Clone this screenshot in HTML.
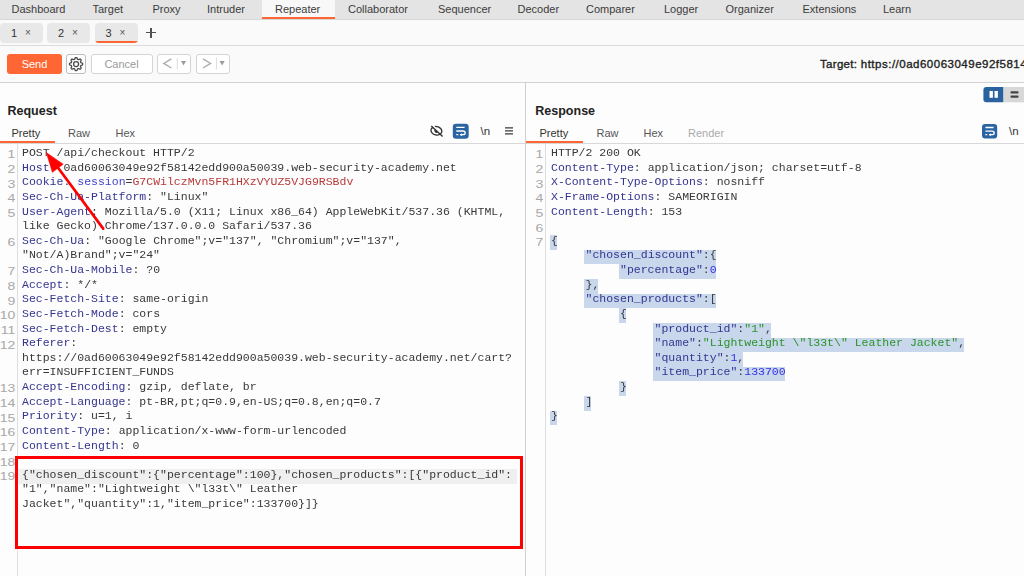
<!DOCTYPE html>
<html><head><meta charset="utf-8">
<style>
*{box-sizing:border-box;margin:0;padding:0}
html,body{width:1024px;height:576px;overflow:hidden;background:#fdfdfd;font-family:"Liberation Sans",sans-serif;color:#3a3a3a}
.a{position:absolute}
#nav{left:0;top:0;width:1024px;height:19px;background:#e4e4e4}
#nav span{position:absolute;top:0;font-size:11px;line-height:19px;color:#3c3c3c;white-space:nowrap}
#navsel{left:262px;top:0;width:73px;height:19px;background:#f8f8f8}
#navul{left:262px;top:17px;width:73px;height:2px;background:#ff6633}
#tabs{left:0;top:19px;width:1024px;height:26px;background:#fafafa;border-top:1px solid #d6d9d9}
.pill{position:absolute;top:23px;height:20px;width:43px;background:#e8e8e8;border-radius:4px;font-size:11px;line-height:20px;color:#333}
.pill b{position:absolute;font-weight:normal}
.pill i{position:absolute;font-style:normal;font-size:10px;color:#555}
#tb{left:0;top:45px;width:1024px;height:38px;background:#fafafa;border-top:1px solid #dcdcdc;border-bottom:1px solid #d3d2d0}
.btn{position:absolute;top:54px;height:20px;border:1px solid #d4d4d4;border-radius:3px;background:#fff}
.code{will-change:transform;font-family:"Liberation Mono",monospace;font-size:11.5px;line-height:14.625px;white-space:pre;color:#383838}
.code div{height:14.625px}
.n{color:#35358f}.p{color:#4545cc}.r{color:#b83a3a}.g{color:#2a942a}.u{color:#3232e4}
.hl{position:absolute;background:#c8d7ec;height:14.625px}
.ln{font-family:"Liberation Sans",sans-serif;font-size:11.5px;line-height:14.625px;color:#a8a8a8;text-align:right;transform:scaleX(1.22);transform-origin:100% 0}
.ln div{height:14.625px}
.tab{position:absolute;font-size:11px;line-height:14px;white-space:nowrap}
</style></head><body>
<div id="nav" class="a"><div id="navsel" class="a"></div><div id="navul" class="a"></div><span style="left:11.5px">Dashboard</span><span style="left:92.5px">Target</span><span style="left:152.5px">Proxy</span><span style="left:207px">Intruder</span><span style="left:275px">Repeater</span><span style="left:348px">Collaborator</span><span style="left:438px">Sequencer</span><span style="left:517.5px">Decoder</span><span style="left:586px">Comparer</span><span style="left:664px">Logger</span><span style="left:725.5px">Organizer</span><span style="left:802.5px">Extensions</span><span style="left:883px">Learn</span></div>
<div id="tabs" class="a"></div>
<div class="pill" style="left:0"><b style="left:11px">1</b><i style="left:25px">×</i></div>
<div class="pill" style="left:47px"><b style="left:11px">2</b><i style="left:25px">×</i></div>
<div class="pill" style="left:94.5px;overflow:hidden"><b style="left:11px">3</b><i style="left:25px">×</i><div class="a" style="left:0;bottom:0;width:43px;height:2px;background:#ff6633"></div></div>
<div class="a" style="left:146px;top:32.3px;width:10px;height:1.2px;background:#505050"></div>
<div class="a" style="left:150.4px;top:28px;width:1.2px;height:9.8px;background:#505050"></div>
<div id="tb" class="a"></div>
<div class="a" style="left:7px;top:54px;width:55px;height:20px;background:#ff6633;border-radius:3px;color:#fff;font-size:11px;line-height:20px;text-align:center">Send</div>
<div class="btn" style="left:66px;width:20px;border-color:#bdbdbd"></div>
<svg class="a" style="left:0;top:0" width="1024" height="576"><path d="M76.10,57.55 L76.36,57.56 L76.61,57.60 L76.86,57.69 L77.08,57.94 L77.22,58.46 L77.33,58.98 L77.47,59.24 L77.64,59.37 L77.81,59.45 L77.99,59.53 L78.17,59.60 L78.36,59.67 L78.57,59.70 L78.85,59.61 L79.29,59.32 L79.76,59.06 L80.10,59.03 L80.34,59.14 L80.54,59.29 L80.73,59.47 L80.91,59.66 L81.06,59.86 L81.17,60.10 L81.14,60.44 L80.88,60.91 L80.59,61.35 L80.50,61.63 L80.53,61.84 L80.60,62.03 L80.67,62.21 L80.75,62.39 L80.83,62.56 L80.96,62.73 L81.22,62.87 L81.74,62.98 L82.26,63.12 L82.51,63.34 L82.60,63.59 L82.64,63.84 L82.65,64.10 L82.64,64.36 L82.60,64.61 L82.51,64.86 L82.26,65.08 L81.74,65.22 L81.22,65.33 L80.96,65.47 L80.83,65.64 L80.75,65.81 L80.67,65.99 L80.60,66.17 L80.53,66.36 L80.50,66.57 L80.59,66.85 L80.88,67.29 L81.14,67.76 L81.17,68.10 L81.06,68.34 L80.91,68.54 L80.73,68.73 L80.54,68.91 L80.34,69.06 L80.10,69.17 L79.76,69.14 L79.29,68.88 L78.85,68.59 L78.57,68.50 L78.36,68.53 L78.17,68.60 L77.99,68.67 L77.81,68.75 L77.64,68.83 L77.47,68.96 L77.33,69.22 L77.22,69.74 L77.08,70.26 L76.86,70.51 L76.61,70.60 L76.36,70.64 L76.10,70.65 L75.84,70.64 L75.59,70.60 L75.34,70.51 L75.12,70.26 L74.98,69.74 L74.87,69.22 L74.73,68.96 L74.56,68.83 L74.39,68.75 L74.21,68.67 L74.03,68.60 L73.84,68.53 L73.63,68.50 L73.35,68.59 L72.91,68.88 L72.44,69.14 L72.10,69.17 L71.86,69.06 L71.66,68.91 L71.47,68.73 L71.29,68.54 L71.14,68.34 L71.03,68.10 L71.06,67.76 L71.32,67.29 L71.61,66.85 L71.70,66.57 L71.67,66.36 L71.60,66.17 L71.53,65.99 L71.45,65.81 L71.37,65.64 L71.24,65.47 L70.98,65.33 L70.46,65.22 L69.94,65.08 L69.69,64.86 L69.60,64.61 L69.56,64.36 L69.55,64.10 L69.56,63.84 L69.60,63.59 L69.69,63.34 L69.94,63.12 L70.46,62.98 L70.98,62.87 L71.24,62.73 L71.37,62.56 L71.45,62.39 L71.53,62.21 L71.60,62.03 L71.67,61.84 L71.70,61.63 L71.61,61.35 L71.32,60.91 L71.06,60.44 L71.03,60.10 L71.14,59.86 L71.29,59.66 L71.47,59.47 L71.66,59.29 L71.86,59.14 L72.10,59.03 L72.44,59.06 L72.91,59.32 L73.35,59.61 L73.63,59.70 L73.84,59.67 L74.03,59.60 L74.21,59.53 L74.39,59.45 L74.56,59.37 L74.73,59.24 L74.87,58.98 L74.98,58.46 L75.12,57.94 L75.34,57.69 L75.59,57.60 L75.84,57.56 Z" fill="none" stroke="#4a4a4a" stroke-width="1.3" stroke-linejoin="round"/><circle cx="76.1" cy="64.1" r="2.5" fill="none" stroke="#4a4a4a" stroke-width="1.3"/></svg>
<div class="btn" style="left:90.5px;width:62px;color:#9a9a9a;font-size:11px;line-height:18px;text-align:center">Cancel</div>
<div class="btn" style="left:157px;width:34px"></div>
<div class="btn" style="left:195.5px;width:34px"></div>
<svg class="a" style="left:0;top:0" width="1024" height="576">
<path d="M171.4,58.8 L163.8,63.4 L171.4,68" fill="none" stroke="#adadad" stroke-width="1.4"/>
<rect x="176.8" y="57.8" width="1" height="11.7" fill="#dcdcdc"/>
<path d="M181,61 L186,61 L183.5,65.6 Z" fill="#9a9a9a"/>
<path d="M203,58.8 L210.6,63.4 L203,68" fill="none" stroke="#adadad" stroke-width="1.4"/>
<rect x="215.9" y="57.8" width="1" height="11.7" fill="#dcdcdc"/>
<path d="M219.6,61 L224.6,61 L222.1,65.6 Z" fill="#9a9a9a"/>
</svg>
<div class="a" style="left:820px;top:56px;font-size:11.5px;line-height:16px;color:#222;-webkit-text-stroke:0.35px #222;white-space:nowrap"><span style="letter-spacing:0.3px">Target: </span><span style="letter-spacing:0.5px">https://0ad60063049e92f58142edd900a50039.web-security-academy.net</span></div>
<div class="a" style="left:525px;top:83px;width:1px;height:493px;background:#cfcfcf"></div>
<div class="a" style="left:7.5px;top:103.7px;font-size:12.5px;font-weight:bold;color:#222;line-height:15px">Request</div>
<div class="tab" style="left:11.5px;top:126.3px;color:#333">Pretty</div>
<div class="tab" style="left:68px;top:126.3px;color:#555">Raw</div>
<div class="tab" style="left:115.5px;top:126.3px;color:#555">Hex</div>
<div class="a" style="left:0;top:141px;width:55px;height:2px;background:#ff6633"></div>
<div class="a" style="left:0;top:143px;width:525px;height:1px;background:#d8d8d8"></div>
<div class="a" style="left:17px;top:144px;width:1px;height:432px;background:#dedede"></div>
<svg class="a" style="left:0;top:0" width="1024" height="576">
<ellipse cx="436.4" cy="130.8" rx="5.5" ry="4.2" fill="none" stroke="#333" stroke-width="1.35" transform="rotate(12 436.4 130.8)"/>
<path d="M432.5,125.4 L437.5,130.1" stroke="#fdfdfd" stroke-width="1.6"/>
<path d="M438,132.2 A2.2,2.2 0 0 1 434.8,129.2 Z" fill="#333"/>
<path d="M431.3,125.9 L442.6,136.6" stroke="#333" stroke-width="1.35"/>
<rect x="452.8" y="123.7" width="15.9" height="15" rx="3.2" fill="#2a64a2"/>
<path d="M456.3,127.3 H464.6 M456.3,131 H463 Q465.2,131 465.2,132.9 Q465.2,134.7 463,134.7 H460.3 M456.3,134.7 H458.3" fill="none" stroke="#fff" stroke-width="1.3"/>
<path d="M461.8,133.2 L459.8,134.7 L461.8,136.2 Z" fill="#fff"/>
<path d="M505,127.8 H513 M505,130.8 H513 M505,133.8 H513" stroke="#3a3a3a" stroke-width="1.3"/>
</svg>
<div class="a" style="left:480.5px;top:123.5px;font-size:11.5px;line-height:14px;color:#333">\n</div>
<div class="a" style="left:535.3px;top:103.7px;font-size:12.5px;font-weight:bold;color:#222;line-height:15px">Response</div>
<div class="tab" style="left:539.5px;top:126.3px;color:#333">Pretty</div>
<div class="tab" style="left:596.5px;top:126.3px;color:#555">Raw</div>
<div class="tab" style="left:643.5px;top:126.3px;color:#555">Hex</div>
<div class="tab" style="left:688px;top:126.3px;color:#aaa">Render</div>
<div class="a" style="left:526px;top:141px;width:57px;height:2px;background:#ff6633"></div>
<div class="a" style="left:526px;top:143px;width:498px;height:1px;background:#d8d8d8"></div>
<div class="a" style="left:545px;top:144px;width:1px;height:432px;background:#dedede"></div>
<svg class="a" style="left:0;top:0" width="1024" height="576">
<path d="M983.4,90 Q983.4,87 986.4,87 H1003.5 V102.3 H986.4 Q983.4,102.3 983.4,99.3 Z" fill="#2a62a0"/>
<rect x="1003.5" y="87" width="20.5" height="15.3" fill="#d8d8d8"/>
<rect x="989.5" y="91" width="3.4" height="6.8" fill="#fff"/>
<rect x="994.5" y="91" width="3.4" height="6.8" fill="#fff"/>
<rect x="1010.5" y="91.3" width="8" height="2.3" rx="0.8" fill="#444"/>
<rect x="1010.5" y="95.5" width="8" height="2.3" rx="0.8" fill="#444"/>
<rect x="982" y="124" width="15.2" height="14.5" rx="3.2" fill="#2a64a2"/>
<path d="M985.4,127.5 H993.6 M985.4,131.1 H992 Q994.2,131.1 994.2,132.9 Q994.2,134.7 992,134.7 H989.3 M985.4,134.7 H987.3" fill="none" stroke="#fff" stroke-width="1.3"/>
<path d="M990.8,133.2 L988.8,134.7 L990.8,136.2 Z" fill="#fff"/>
</svg>
<div class="a" style="left:1009px;top:123.5px;font-size:11.5px;line-height:14px;color:#333">\n</div>
<div class="a" style="left:18px;top:469.200px;width:499px;height:14.625px;background:#efefef"></div>
<div class="a ln" style="left:0;top:147.45px;width:15.3px"><div>1</div><div>2</div><div>3</div><div>4</div><div>5</div><div></div><div>6</div><div></div><div>7</div><div>8</div><div>9</div><div>10</div><div>11</div><div>12</div><div></div><div></div><div>13</div><div>14</div><div>15</div><div>16</div><div>17</div><div>18</div><div>19</div><div></div><div></div></div>
<div class="a code" style="left:22.4px;top:146.100px"><div>POST /api/checkout HTTP/2</div><div><span class=n>Host</span>: 0ad60063049e92f58142edd900a50039.web-security-academy.net</div><div><span class=n>Cookie</span>: <span class=p>session</span>=<span class=r>G7CWilczMvn5FR1HXzVYUZ5VJG9RSBdv</span></div><div><span class=n>Sec-Ch-Ua-Platform</span>: "Linux"</div><div><span class=n>User-Agent</span>: Mozilla/5.0 (X11; Linux x86_64) AppleWebKit/537.36 (KHTML,</div><div>like Gecko) Chrome/137.0.0.0 Safari/537.36</div><div><span class=n>Sec-Ch-Ua</span>: "Google Chrome";v="137", "Chromium";v="137",</div><div>"Not/A)Brand";v="24"</div><div><span class=n>Sec-Ch-Ua-Mobile</span>: ?0</div><div><span class=n>Accept</span>: */*</div><div><span class=n>Sec-Fetch-Site</span>: same-origin</div><div><span class=n>Sec-Fetch-Mode</span>: cors</div><div><span class=n>Sec-Fetch-Dest</span>: empty</div><div><span class=n>Referer</span>:</div><div>https://0ad60063049e92f58142edd900a50039.web-security-academy.net/cart?</div><div>err=INSUFFICIENT_FUNDS</div><div><span class=n>Accept-Encoding</span>: gzip, deflate, br</div><div><span class=n>Accept-Language</span>: pt-BR,pt;q=0.9,en-US;q=0.8,en;q=0.7</div><div><span class=n>Priority</span>: u=1, i</div><div><span class=n>Content-Type</span>: application/x-www-form-urlencoded</div><div><span class=n>Content-Length</span>: 0</div><div></div><div>{"chosen_discount":{"percentage":100},"chosen_products":[{"product_id":</div><div>"1","name":"Lightweight \"l33t\" Leather</div><div>Jacket","quantity":1,"item_price":133700}]}</div></div>
<div class="hl" style="left:549.90px;top:235.200px;width:6.90px"></div>
<div class="hl" style="left:584.40px;top:249.825px;width:131.12px"></div>
<div class="hl" style="left:618.91px;top:264.450px;width:96.61px"></div>
<div class="hl" style="left:584.40px;top:279.075px;width:13.80px"></div>
<div class="hl" style="left:584.40px;top:293.700px;width:131.12px"></div>
<div class="hl" style="left:618.91px;top:308.325px;width:6.90px"></div>
<div class="hl" style="left:653.41px;top:322.950px;width:117.32px"></div>
<div class="hl" style="left:653.41px;top:337.575px;width:310.55px"></div>
<div class="hl" style="left:653.41px;top:352.200px;width:89.71px"></div>
<div class="hl" style="left:653.41px;top:366.825px;width:131.12px"></div>
<div class="hl" style="left:618.91px;top:381.450px;width:6.90px"></div>
<div class="hl" style="left:584.40px;top:396.075px;width:6.90px"></div>
<div class="hl" style="left:549.90px;top:410.700px;width:6.90px"></div>
<div class="a ln" style="left:527px;top:147.45px;width:16.4px"><div>1</div><div>2</div><div>3</div><div>4</div><div>5</div><div>6</div><div>7</div><div></div><div></div><div></div><div></div><div></div><div></div><div></div><div></div><div></div><div></div><div></div><div></div></div>
<div class="a code" style="left:550.9px;top:146.100px"><div>HTTP/2 200 OK</div><div><span class=n>Content-Type</span>: application/json; charset=utf-8</div><div><span class=n>X-Content-Type-Options</span>: nosniff</div><div><span class=n>X-Frame-Options</span>: SAMEORIGIN</div><div><span class=n>Content-Length</span>: 153</div><div></div><div>{</div><div>     <span class=n>"chosen_discount"</span>:{</div><div>          <span class=n>"percentage"</span>:<span class=u>0</span></div><div>     },</div><div>     <span class=n>"chosen_products"</span>:[</div><div>          {</div><div>               <span class=n>"product_id"</span>:<span class=g>"1"</span>,</div><div>               <span class=n>"name"</span>:<span class=g>"Lightweight \"l33t\" Leather Jacket"</span>,</div><div>               <span class=n>"quantity"</span>:<span class=u>1</span>,</div><div>               <span class=n>"item_price"</span>:<span class=u>133700</span></div><div>          }</div><div>     ]</div><div>}</div></div>
<div class="a" style="left:15px;top:456.4px;width:508px;height:92.4px;border:3px solid #ff0000"></div>
<svg class="a" style="left:0;top:0" width="1024" height="576">
<path d="M103.2,228.6 L57.5,167" stroke="#ff0000" stroke-width="2.7" stroke-linecap="round"/>
<path d="M46.3,152.6 L63.2,164.2 L52.4,172.3 Z" fill="#ff0000" stroke="#ff0000" stroke-width="0.6" stroke-linejoin="round"/>
</svg>
</body></html>
